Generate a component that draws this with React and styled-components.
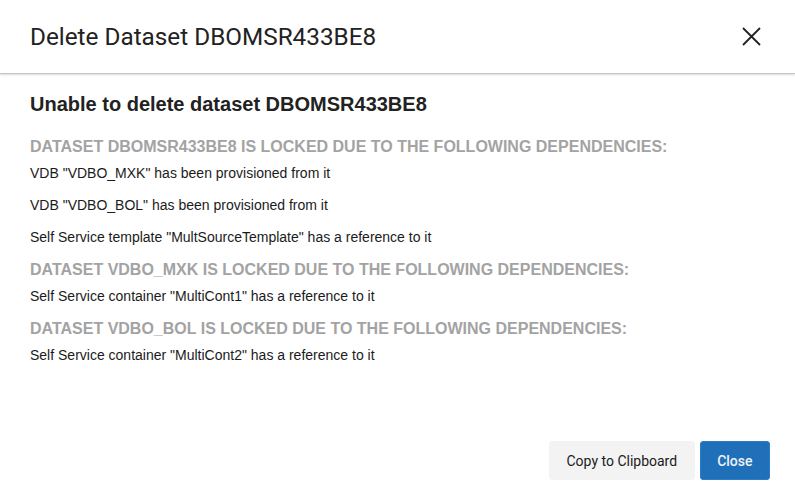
import React from "react";
import styled, { createGlobalStyle } from "styled-components";

const Global = createGlobalStyle`
  html, body { margin: 0; padding: 0; background: #fff; }
  #root { min-height: 100vh; display: flex; }
  * { box-sizing: border-box; }
`;

const Dialog = styled.div`
  flex: 1;
  display: flex;
  flex-direction: column;
  height: 491px;
  background: #fff;
`;

const Header = styled.header`
  height: 74px;
  flex: none;
  display: flex;
  align-items: center;
  justify-content: space-between;
  padding: 0 34px 0 30px;
  border-bottom: 1px solid #c4c4c4;
  box-shadow: 0 1px 2px rgba(0, 0, 0, 0.15);
`;

const Title = styled.h1`
  margin: 0;
  font-family: Roboto, "Liberation Sans", sans-serif;
  font-weight: 400;
  font-size: 24.3px;
  color: #222;
`;

const CloseIcon = styled.button`
  border: 0;
  background: none;
  padding: 0;
  width: 20px;
  height: 20px;
  display: flex;
  align-items: center;
  justify-content: center;
  cursor: pointer;
`;

const Content = styled.main`
  flex: 1;
  padding: 18px 30px 0;
  font-family: "Liberation Sans", Arial, sans-serif;
`;

const Heading = styled.h2`
  margin: 0 0 22px;
  font-size: 20px;
  line-height: 24px;
  font-weight: 700;
  color: #222;
`;

const GroupTitle = styled.h3`
  margin: 0 0 9px;
  font-size: 16px;
  line-height: 18px;
  font-weight: 700;
  color: #a3a3a3;
  text-transform: uppercase;
`;

const Item = styled.p`
  margin: 0 0 16px;
  font-size: 14px;
  line-height: 16px;
  color: #1b1b1b;
`;

const Footer = styled.footer`
  flex: none;
  display: flex;
  justify-content: flex-end;
  gap: 5px;
  padding: 0 25px 11px;
`;

const Button = styled.button`
  height: 39px;
  padding: 0 ${(p) => (p.$primary ? 16.5 : 16.5)}px;
  border-radius: 3px;
  font-family: Roboto, "Liberation Sans", sans-serif;
  font-size: 14px;
  cursor: pointer;
  border: 1px solid ${(p) => (p.$primary ? "#2a7dc6" : "#f3f3f3")};
  background: ${(p) => (p.$primary ? "#1f6fb9" : "#f3f3f3")};
  color: ${(p) => (p.$primary ? "#eef3f8" : "#1b1b1b")};
  font-weight: ${(p) => (p.$primary ? 500 : 400)};
`;

const groups = [
  {
    title: "Dataset DBOMSR433BE8 is locked due to the following dependencies:",
    items: [
      'VDB "VDBO_MXK" has been provisioned from it',
      'VDB "VDBO_BOL" has been provisioned from it',
      'Self Service template "MultSourceTemplate" has a reference to it',
    ],
  },
  {
    title: "Dataset VDBO_MXK is locked due to the following dependencies:",
    items: ['Self Service container "MultiCont1" has a reference to it'],
  },
  {
    title: "Dataset VDBO_BOL is locked due to the following dependencies:",
    items: ['Self Service container "MultiCont2" has a reference to it'],
  },
];

export default function App() {
  return (
    <>
      <Global />
      <Dialog>
        <Header>
          <Title>Delete Dataset DBOMSR433BE8</Title>
          <CloseIcon aria-label="Close">
            <svg width="19" height="19" viewBox="0 0 19 19">
              <path d="M1 1 L18 18 M18 1 L1 18" stroke="#222" strokeWidth="1.8" />
            </svg>
          </CloseIcon>
        </Header>
        <Content>
          <Heading>Unable to delete dataset DBOMSR433BE8</Heading>
          {groups.map((g) => (
            <section key={g.title}>
              <GroupTitle>{g.title}</GroupTitle>
              {g.items.map((i) => (
                <Item key={i}>{i}</Item>
              ))}
            </section>
          ))}
        </Content>
        <Footer>
          <Button>Copy to Clipboard</Button>
          <Button $primary>Close</Button>
        </Footer>
      </Dialog>
    </>
  );
}
